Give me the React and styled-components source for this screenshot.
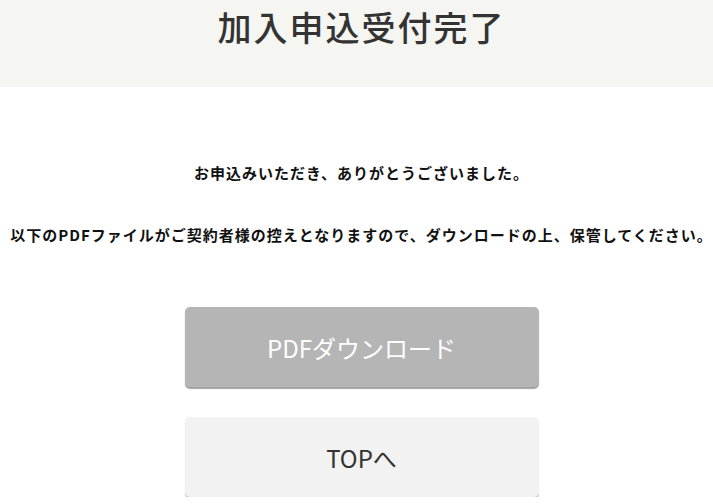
import React from "react";
import styled, { createGlobalStyle } from "styled-components";

const GlobalStyle = createGlobalStyle`
  html, body {
    overflow-x: hidden;
  }
  body {
    margin: 0;
    background: #fff;
    font-family: "Noto Sans CJK JP", "Noto Sans", sans-serif;
    color: #333;
  }
`;

const Page = styled.div`
  min-width: 723px;
`;

const Head = styled.header`
  height: 87px;
  background: #f5f5f1;
`;

const Title = styled.h1`
  margin: 0;
  line-height: 54px;
  font-size: 34px;
  font-weight: 500;
  letter-spacing: 2px;
  text-align: center;
  color: #333;
`;

const Body = styled.main`
  display: flex;
  flex-direction: column;
  align-items: center;
  padding-top: 74px;
`;

const Message = styled.p`
  margin: 0 0 38px;
  line-height: 24px;
  font-size: 15px;
  font-weight: 700;
  letter-spacing: 1px;
  color: #111;
  white-space: nowrap;
`;

const Buttons = styled.div`
  display: flex;
  flex-direction: column;
  gap: 30px;
  margin-top: 22px;
`;

const Button = styled.button`
  width: 354px;
  height: 80px;
  border: none;
  border-radius: 5px;
  font-family: inherit;
  font-size: 24px;
  background: ${(p) => (p.primary ? "#b5b5b5" : "#f2f2f2")};
  color: ${(p) => (p.primary ? "#fff" : "#333")};
  box-shadow: 0 2px 1px ${(p) => (p.primary ? "#a2a2a2" : "#c6c6c6")};
  cursor: pointer;
`;

const App = () => {
  return (
    <Page>
      <GlobalStyle />
      <Head>
        <Title>加入申込受付完了</Title>
      </Head>
      <Body>
        <Message>お申込みいただき、ありがとうございました。</Message>
        <Message>
          以下のPDFファイルがご契約者様の控えとなりますので、ダウンロードの上、保管してください。
        </Message>
        <Buttons>
          <Button primary>PDFダウンロード</Button>
          <Button>TOPへ</Button>
        </Buttons>
      </Body>
    </Page>
  );
};

export default App;
